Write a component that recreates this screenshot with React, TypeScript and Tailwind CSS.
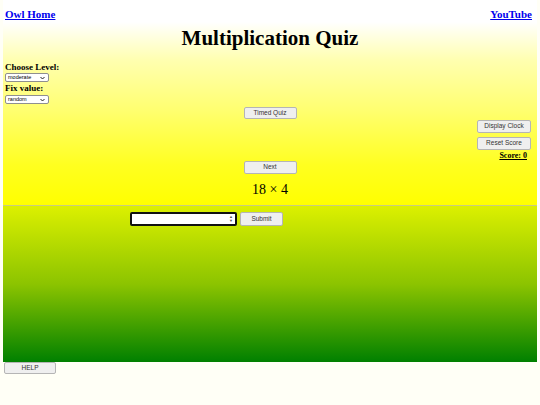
import React from "react";

function Btn({ children, className = "" }: { children: React.ReactNode; className?: string }) {
  return (
    <button
      className={
        "flex items-center justify-center bg-[#efefef] border border-[#b5b5b5] rounded-[2px] text-[6.5px] leading-none text-[#333] font-['Liberation_Sans',sans-serif] " +
        className
      }
    >
      {children}
    </button>
  );
}

function Sel({ value }: { value: string }) {
  return (
    <div className="flex items-center justify-between w-[44px] h-[9px] bg-white border border-[#8f8f8f] rounded-[2px] pl-[2px] pr-[3px] text-[5.5px] leading-none text-black font-['Liberation_Sans',sans-serif]">
      <span>{value}</span>
      <svg width="5" height="4" viewBox="0 0 10 8">
        <path d="M1 2 L5 6 L9 2" fill="none" stroke="#222" strokeWidth="2" />
      </svg>
    </div>
  );
}

export default function App() {
  return (
    <div className="min-h-[405px] w-[540px] bg-[#fffff6] px-[3px] font-['Liberation_Serif',serif] text-black">
      <div className="h-[205px] bg-[linear-gradient(to_bottom,#ffffff_0px,#ffffff_22px,#ffffb0_60px,#ffff70_110px,#ffff20_165px,#ffff00_205px)] pt-[7px]">
        <div className="flex justify-between px-[2px] pr-[5px] text-[11px] leading-[14px] font-bold">
          <a className="text-[#0000ee] underline">Owl Home</a>
          <a className="text-[#0000ee] underline">YouTube</a>
        </div>
        <h1 className="mt-[4px] text-center text-[21px] leading-[26px] font-bold">Multiplication Quiz</h1>
        <div className="mt-[11px] px-[2px]">
          <div className="text-[9px] leading-[11px] font-bold">Choose Level:</div>
          <Sel value="moderate" />
          <div className="mt-[1px] text-[9px] leading-[11px] font-bold">Fix value:</div>
          <div className="mt-[1px]">
            <Sel value="random" />
          </div>
        </div>
        <div className="mt-[3px] flex justify-center">
          <Btn className="w-[53px] h-[12px]">Timed Quiz</Btn>
        </div>
        <div className="mt-[1px] flex justify-end pr-[6px]">
          <div className="flex flex-col w-[54px]">
            <Btn className="w-[54px] h-[13px]">Display Clock</Btn>
            <Btn className="mt-[4px] w-[54px] h-[13px]">Reset Score</Btn>
            <div className="mt-[1px] text-right pr-[4px] text-[8px] leading-[10px] font-bold underline">Score: 0</div>
          </div>
        </div>
        <div className="flex justify-center">
          <Btn className="w-[53px] h-[13px]">Next</Btn>
        </div>
        <div className="mt-[8px] text-center text-[14px] leading-[16px]">18 × 4</div>
      </div>
      <div className="h-[1px] bg-[#c8cc80]" />
      <div className="h-[156px] bg-[linear-gradient(to_bottom,#dcf000,#8cc400_50%,#008000)] pt-[6px]">
        <div className="flex items-center pl-[127px] gap-[3px]">
          <div className="flex items-center justify-end w-[107px] h-[14px] bg-white border-2 border-[#111] rounded-[2px] pr-[2px]">
            <div className="flex flex-col items-center text-[4px] leading-[4px] text-[#555] font-['Liberation_Sans',sans-serif]">
              <span>▲</span>
              <span>▼</span>
            </div>
          </div>
          <Btn className="w-[43px] h-[14px]">Submit</Btn>
        </div>
      </div>
      <div className="pl-[1px]">
        <Btn className="w-[52px] h-[12px]">HELP</Btn>
      </div>
    </div>
  );
}
